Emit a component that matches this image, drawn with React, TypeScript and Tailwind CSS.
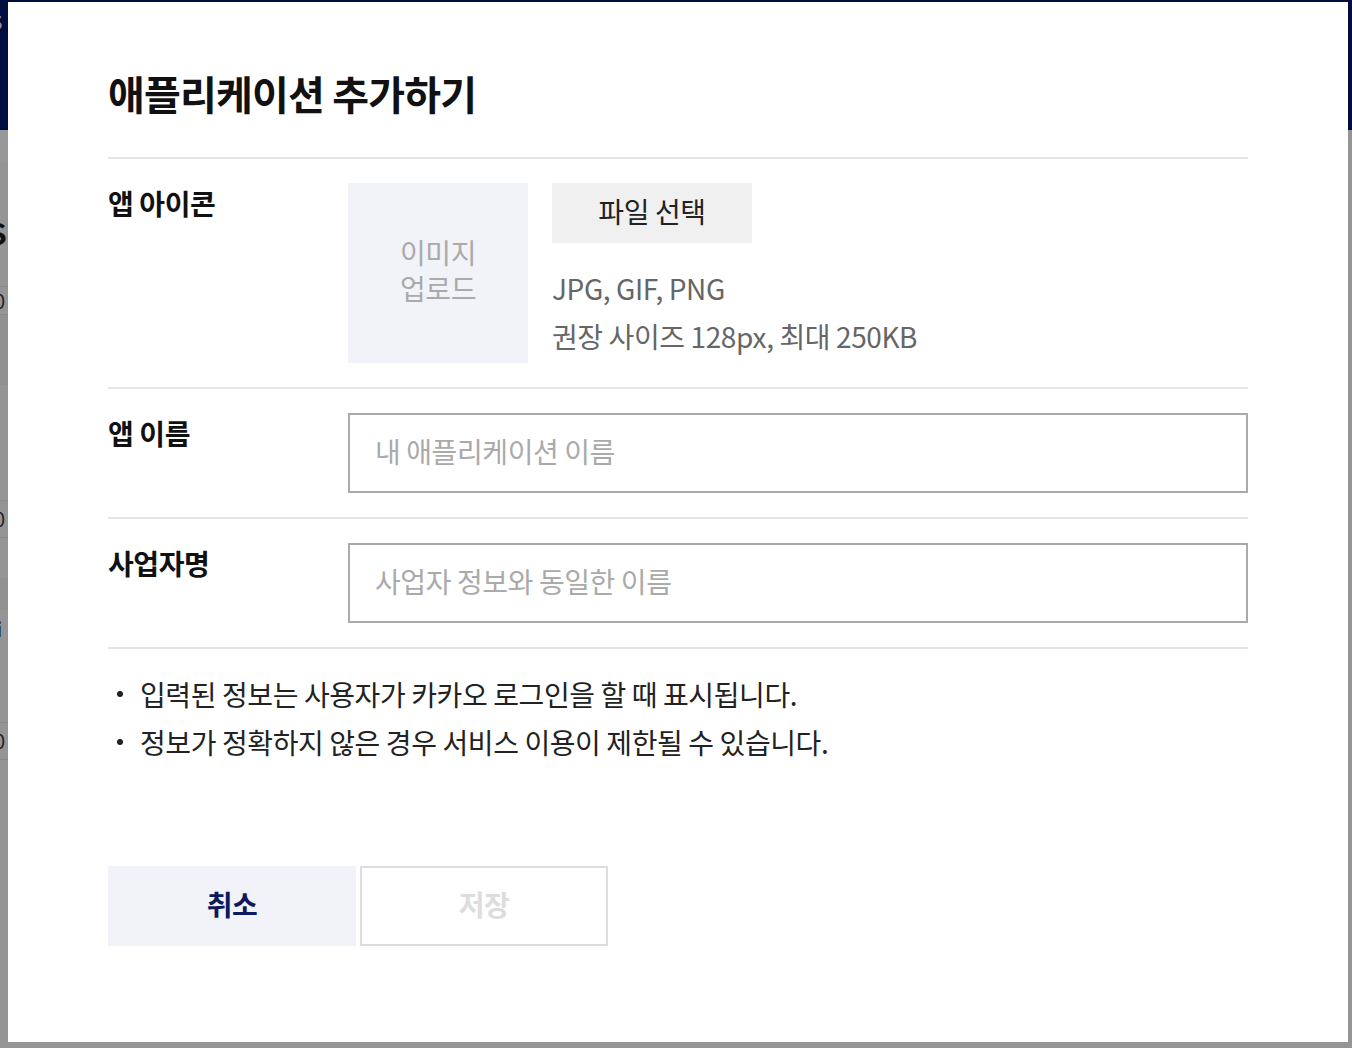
export default function App() {
  const font = { fontFamily: '"Noto Sans CJK KR", "Noto Sans", sans-serif' };

  return (
    <div className="relative h-[1048px] w-full overflow-hidden bg-[#959595]" style={font}>
      {/* page behind the overlay */}
      <div className="flex h-[130px] items-start bg-[#010c3f] pt-[10px]">
        <span className="-ml-[10px] text-[20px] font-bold leading-[24px] text-[#8a8fa8]">S</span>
      </div>
      <div className="flex w-[200px] flex-col">
        <div className="h-[32px] bg-[#989898]" />
        <div className="h-[124px] pt-[52px]">
          <span className="-ml-[12px] block text-[30px] font-bold leading-[36px] text-[#111]">S</span>
        </div>
        <div className="flex h-[29px] items-center border-y border-[#8a8a8a] text-[20px] text-[#222]">
          <span className="-ml-[6px]">0</span>
        </div>
        <div className="h-[70px] bg-[#919191]" />
        <div className="h-[115px]" />
        <div className="flex h-[38px] items-center border-y border-[#8a8a8a] text-[20px] text-[#222]">
          <span className="-ml-[6px]">0</span>
        </div>
        <div className="h-[40px]" />
        <div className="h-[32px] bg-[#919191]" />
        <div className="h-[57px] pt-[4px]">
          <span className="-ml-[4px] block text-[20px] font-bold text-[#222]">i</span>
        </div>
        <div className="h-[55px]" />
        <div className="flex h-[38px] items-center border-y border-[#8a8a8a] text-[20px] text-[#222]">
          <span className="-ml-[6px]">0</span>
        </div>
      </div>

      {/* modal */}
      <div className="absolute left-[8px] top-[2px] h-[1040px] w-[1340px] bg-white px-[100px] tracking-[-0.4px]">
        <div className="border-b-2 border-[#e5e5e5] pb-[36px] pt-[63px]">
          <h1 className="text-[40px] font-bold leading-[56px] tracking-[-0.8px] text-[#111]">애플리케이션 추가하기</h1>
        </div>

        <div className="flex border-b-2 border-[#e5e5e5] py-[24px]">
          <div className="w-[240px] text-[28px] font-bold leading-[40px] text-[#111]">앱 아이콘</div>
          <div className="flex gap-[24px]">
            <div className="flex h-[180px] w-[180px] flex-col items-center justify-center bg-[#f2f3f8] pb-[6px] text-center text-[28px] leading-[36px] text-[#aaa]">
              <span>이미지</span>
              <span>업로드</span>
            </div>
            <div className="flex flex-col">
              <button className="h-[60px] w-[200px] bg-[#f0f0f0] pb-[5px] text-[28px] text-[#222]">파일 선택</button>
              <div className="mt-[21px] text-[28px] leading-[48px] text-[#666]">
                <p>JPG, GIF, PNG</p>
                <p>권장 사이즈 128px, 최대 250KB</p>
              </div>
            </div>
          </div>
        </div>

        <div className="flex border-b-2 border-[#e5e5e5] py-[24px]">
          <div className="w-[240px] text-[28px] font-bold leading-[40px] text-[#111]">앱 이름</div>
          <input
            placeholder="내 애플리케이션 이름"
            className="h-[80px] flex-1 border-2 border-[#aaa] px-[25px] pb-[4px] text-[28px] text-[#222] outline-none placeholder:text-[#aaa]"
          />
        </div>

        <div className="flex border-b-2 border-[#e5e5e5] py-[24px]">
          <div className="w-[240px] text-[28px] font-bold leading-[40px] text-[#111]">사업자명</div>
          <input
            placeholder="사업자 정보와 동일한 이름"
            className="h-[80px] flex-1 border-2 border-[#aaa] px-[25px] pb-[4px] text-[28px] text-[#222] outline-none placeholder:text-[#aaa]"
          />
        </div>

        <ul className="pt-[21px] text-[28px] leading-[48px] text-[#222]">
          <li className="flex items-center">
            <span className="ml-[9px] mr-[17px] h-[6px] w-[6px] rounded-full bg-[#222]" />
            입력된 정보는 사용자가 카카오 로그인을 할 때 표시됩니다.
          </li>
          <li className="flex items-center">
            <span className="ml-[9px] mr-[17px] h-[6px] w-[6px] rounded-full bg-[#222]" />
            정보가 정확하지 않은 경우 서비스 이용이 제한될 수 있습니다.
          </li>
        </ul>

        <div className="mt-[100px] flex gap-[4px]">
          <button className="h-[80px] w-[248px] bg-[#f2f3f8] pb-[4px] text-[28px] font-bold text-[#0b1a5c]">취소</button>
          <button className="h-[80px] w-[248px] border-2 border-[#ddd] bg-white pb-[4px] text-[28px] font-bold text-[#ddd]">저장</button>
        </div>
      </div>
    </div>
  );
}
